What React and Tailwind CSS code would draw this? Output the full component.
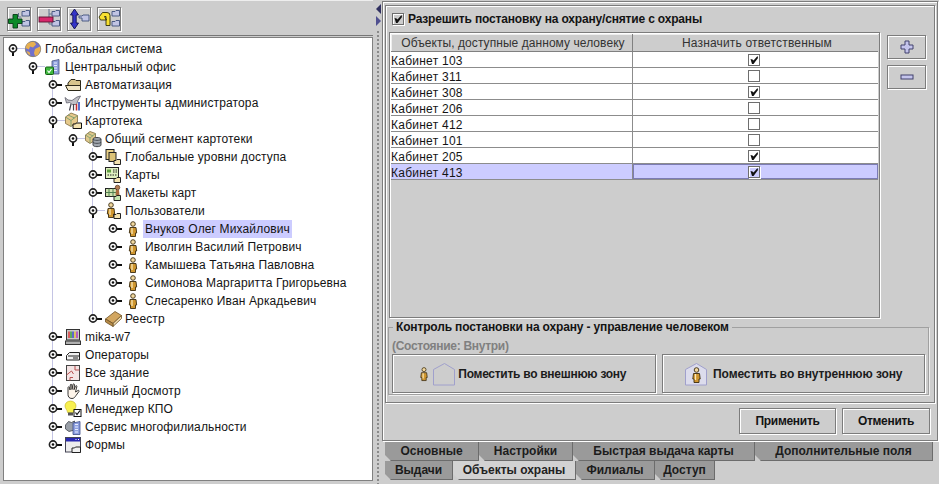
import React from "react";

const Handle = ({ open }) => (
  <svg width="18" height="18" viewBox="0 0 18 18" className="relative shrink-0 mr-0">
    {open ? (
      <>
        <path d="M10 8.500h8" stroke="#c4c4e4" />
        <path d="M6 11v5" stroke="#111" strokeWidth="2" />
      </>
    ) : (
      <path d="M10 9h5" stroke="#111" strokeWidth="2" />
    )}
    <circle cx="6" cy="8.500" r="3.600" fill="#fff" stroke="#222" strokeWidth="1.600" />
    <circle cx="6" cy="8.500" r="1.300" fill="#111" />
  </svg>
);

const Ico = ({ children, w = 16 }) => (
  <svg width={w} height="16" viewBox={`0 0 ${w} 16`} className="shrink-0 overflow-visible">
    {children}
  </svg>
);

const FolderMini = () => (
  <path d="M9 11.500h2l1-1h3.500v5H9z" fill="#f4e3b0" stroke="#222" />
);

const Person = () => (
  <g>
    <circle cx="8" cy="3" r="2.300" fill="#f2d9a0" stroke="#3c2c10" strokeWidth=".9" />
    <path d="M5 6.500h6l.7 5.500h-1.200v3.500h-5V12H4.300z" fill="#cf962f" stroke="#3c2c10" strokeWidth=".9" />
    <path d="M7 7v6" stroke="#fbe8b8" strokeWidth="1.300" />
  </g>
);

const icons = {
  globe: (
    <Ico>
      <circle cx="8" cy="8" r="7.700" fill="#7070cc" stroke="#77704e" strokeWidth=".7" />
      <path d="M2 3c3-2 6-2.500 8-1.500l1 2-3 3-3-1-1 3-3.500-1.500zM10 8l5-2.500.5 3.500-2.500 5-3 1-1-3zM1.500 10l3 1 1 3.500-2.500-1.500z" fill="#e8b050" />
    </Ico>
  ),
  office: (
    <Ico>
      <path d="M7 2l7-1.500V15H7z" fill="#8fa0dc" stroke="#44507c" strokeWidth=".8" />
      <path d="M9 4h3M9 6.500h3M9 9h3M9 11.500h3" stroke="#e6ecff" />
      <rect x=".5" y="8" width="8" height="7.500" rx="1" fill="#3fb83f" stroke="#146014" />
      <path d="M2.500 11.500l1.500 2 2.500-3.500" stroke="#fff" strokeWidth="1.200" fill="none" />
    </Ico>
  ),
  folder: (
    <Ico>
      <path d="M3 6l3-3.500h4l1 1h4.500V13H3z" fill="#d8c48c" stroke="#2c2818" />
      <path d="M.5 8.500h15V13.500H3z" fill="#f2e6c4" stroke="#2c2818" />
    </Ico>
  ),
  tools: (
    <Ico>
      <path d="M0 2.500l3 2.500 4 .5 5-3.500 3.500-1L13 5.500 11.500 9.500H7.500l-3-2-3 .5z" fill="#c0c0c6" stroke="#60606c" strokeWidth=".8" />
      <path d="M6 9l-1.500 6.500M8.500 9v6.500" stroke="#44444f" strokeWidth="1.200" />
      <path d="M11.500 9v6.500" stroke="#c83030" strokeWidth="1.600" />
      <path d="M14 7v8.500" stroke="#3050c0" strokeWidth="1.600" />
    </Ico>
  ),
  archive: (
    <Ico>
      <path d="M.5 4l5.500-4 6.500 2.500v6.500L6 13.500.5 10.500z" fill="#e6c98c" stroke="#7d6a3c" strokeWidth=".8" />
      <path d="M.5 4L6 7.500l6.500-5M6 7.500v6M3 2l6.500 3" stroke="#80a070" strokeWidth="1" fill="none" />
      <path d="M8 11h2.500l1-1h5v5.500H8z" fill="#f4e3b0" stroke="#111" />
    </Ico>
  ),
  segment: (
    <Ico>
      <path d="M.5 4L5 .5l5.500 2v6.500L5 12.500.5 9.500z" fill="#dfc88c" stroke="#7d6a3c" strokeWidth=".8" />
      <path d="M3 2.500l5 2.500M.5 4L5 7l5.500-4.500M5 7v5" stroke="#80a070" strokeWidth=".9" fill="none" />
      <path d="M8 8c0-2 8-2 8 0v6c0 2.200-8 2.200-8 0z" fill="#a0a6ae" stroke="#34383e" strokeWidth=".9" />
      <path d="M8 8c0 1.800 8 1.800 8 0M8 11c0 1.800 8 1.800 8 0" fill="none" stroke="#34383e" strokeWidth=".8" />
    </Ico>
  ),
  levels: (
    <Ico>
      <rect x="1" y=".5" width="8" height="10" fill="#e8d089" stroke="#222" />
      <rect x="4" y="3.500" width="7" height="9" fill="#dcc378" stroke="#222" />
      <FolderMini />
    </Ico>
  ),
  cards: (
    <Ico>
      <rect x=".5" y=".5" width="13" height="11" fill="#dff0c0" stroke="#222" />
      <rect x="2" y="2.500" width="4" height="3" fill="#60a040" />
      <path d="M8 3h4M8 5h4M2.500 8h9" stroke="#222" strokeDasharray="1.500 1" />
      <FolderMini />
    </Ico>
  ),
  layouts: (
    <Ico w={17}>
      <rect x=".5" y="3.500" width="11" height="8" fill="#cfe2b0" stroke="#222" />
      <path d="M4 3.500v8M8 3.500v8M.5 7.500h11" stroke="#508050" />
      <circle cx="12.500" cy="2.500" r="2.300" fill="#b07a50" stroke="#5c3a20" strokeWidth=".7" />
      <path d="M11 5h3l.5 5.500H10.500z" fill="#a86c40" />
      <path d="M9 11.500h2l1-1h3.500v5H9z" fill="#c4e6b0" stroke="#222" />
    </Ico>
  ),
  users: (
    <Ico>
      <g transform="translate(-2 -1)">
        <Person />
      </g>
      <FolderMini />
    </Ico>
  ),
  person: (
    <Ico>
      <Person />
    </Ico>
  ),
  book: (
    <Ico w={17}>
      <path d="M.5 8L10 .5l6.500 4L8 12.500z" fill="#d2a660" stroke="#6c5024" strokeWidth=".8" />
      <path d="M8 12.500L16.500 4.500v3L8 15.500z" fill="#f0dcb0" stroke="#6c5024" strokeWidth=".8" />
      <path d="M.5 8L8 12.500v3L.5 11z" fill="#b88c48" stroke="#6c5024" strokeWidth=".8" />
    </Ico>
  ),
  computer: (
    <Ico>
      <rect x="1.500" y=".5" width="13" height="10.500" fill="#c8c8c8" stroke="#333" />
      <path d="M4 2.500v6.500" stroke="#e03030" strokeWidth="1.400" />
      <path d="M6 2.500v6.500" stroke="#30a030" strokeWidth="1.400" />
      <path d="M8 2.500v6.500" stroke="#3040d0" strokeWidth="1.400" />
      <path d="M10 2.500v6.500" stroke="#e0c030" strokeWidth="1.400" />
      <path d="M12 2.500v6.500" stroke="#b030c0" strokeWidth="1.400" />
      <rect x=".5" y="12" width="15" height="3.500" fill="#b0b0b0" stroke="#333" />
    </Ico>
  ),
  operators: (
    <Ico>
      <path d="M1.500 8.500l3-3h10V13h-13z" fill="#f2f2f2" stroke="#222" />
      <path d="M3 9h11.500M8 11h5" stroke="#222" />
    </Ico>
  ),
  building: (
    <Ico>
      <rect x="1.500" y=".5" width="13" height="15" fill="#f4e4e4" stroke="#444" />
      <path d="M1.500 10l5-4 2 3M10 1v4h4.500M5 15.500v-3h3" fill="none" stroke="#b85050" />
    </Ico>
  ),
  hand: (
    <Ico>
      <path d="M3 7V4.500c0-1 1.500-1 1.500 0L5 7l.3-5c0-1 1.500-1 1.500 0L7 6.500 8 1.500c0-1 1.500-.8 1.500.2l-.5 5 1.500-3.500c.4-1 1.700-.5 1.300.5L10.500 9l2.500-1.500c1-.5 1.500.5.800 1.200L11 12.500c-1 1.500-2 3-4 3-3 0-4-2-4-4z" fill="#fdf4ea" stroke="#222" strokeWidth=".9" />
    </Ico>
  ),
  bulb: (
    <Ico w={16}>
      <path d="M5.500 0C2 0 0 2.500 0 5c0 2.500 2.500 4 2.500 6.500h6C8.500 9 11 7.500 11 5c0-2.500-2-5-5.500-5z" fill="#f8f050" stroke="#c0b020" strokeWidth=".6" />
      <rect x="3" y="11.500" width="5" height="3" fill="#555" />
      <rect x="9" y="8.500" width="7" height="7" fill="#fff" stroke="#111" />
      <path d="M10.500 11.500l1.500 2 3-4" fill="none" stroke="#111" strokeWidth="1.200" />
    </Ico>
  ),
  branches: (
    <Ico>
      <path d="M.5 6l3-3.500 3 1 3-1.500V11L4 12.500.5 10z" fill="#9aa0a8" stroke="#40444c" strokeWidth=".8" />
      <path d="M8 4l7-1.500V15.500H8z" fill="#8ea0e0" stroke="#3c4c88" strokeWidth=".8" />
      <path d="M10 5.500h3M10 8h3M10 10.500h3M10 13h3" stroke="#e8eeff" />
    </Ico>
  ),
  forms: (
    <Ico>
      <rect x=".5" y=".5" width="15" height="14.500" fill="#eeeeee" stroke="#445" />
      <rect x="1" y="1" width="14" height="3.500" fill="#2828b0" />
      <path d="M10.500 2.500h1M13 2.500h1" stroke="#fff" />
      <path d="M7 11h2.500l1-1h5v5.500H7z" fill="#f2f2f2" stroke="#222" />
    </Ico>
  ),
};

const tree = {
  label: "Глобальная система", icon: "globe", open: true, children: [
    {
      label: "Центральный офис", icon: "office", open: true, guide: true, children: [
        { label: "Автоматизация", icon: "folder" },
        { label: "Инструменты администратора", icon: "tools" },
        {
          label: "Картотека", icon: "archive", open: true, children: [
            {
              label: "Общий сегмент картотеки", icon: "segment", open: true, guide: true, children: [
                { label: "Глобальные уровни доступа", icon: "levels" },
                { label: "Карты", icon: "cards" },
                { label: "Макеты карт", icon: "layouts" },
                {
                  label: "Пользователи", icon: "users", open: true, children: [
                    { label: "Внуков Олег Михайлович", icon: "person", selected: true },
                    { label: "Иволгин Василий Петрович", icon: "person" },
                    { label: "Камышева Татьяна Павловна", icon: "person" },
                    { label: "Симонова Маргаритта Григорьевна", icon: "person" },
                    { label: "Слесаренко Иван Аркадьевич", icon: "person" },
                  ],
                },
                { label: "Реестр", icon: "book" },
              ],
            },
          ],
        },
        { label: "mika-w7", icon: "computer" },
        { label: "Операторы", icon: "operators" },
        { label: "Все здание", icon: "building" },
        { label: "Личный Досмотр", icon: "hand" },
        { label: "Менеджер КПО", icon: "bulb" },
        { label: "Сервис многофилиальности", icon: "branches" },
        { label: "Формы", icon: "forms" },
      ],
    },
  ],
};

const TreeNode = ({ node }) => (
  <div>
    <div className="flex h-[18px] items-center">
      <Handle open={node.open} />
      <span className="flex w-[18px] shrink-0 items-center">{icons[node.icon]}</span>
      <span className={`px-[2px] leading-[18px] tracking-[0.13px] whitespace-nowrap ${node.selected ? "bg-[#ccccff]" : ""}`}>
        {node.label}
      </span>
    </div>
    {node.children && (
      <div className="relative ml-[20px]">
        {node.guide && <div className="absolute left-[5px] top-0 bottom-[9px] w-px bg-[#c4c4e4]" />}
        {node.children.map((c) => (
          <TreeNode key={c.label} node={c} />
        ))}
      </div>
    )}
  </div>
);

const ToolFolders = () => (
  <path d="M14 3.500h3l1-1h3.500V8H14zM14 13.500h3l1-1h3.500V18H14z" fill="#c0c4e4" stroke="#40507c" strokeWidth=".9" />
);

const toolButtons = [
  <>
    <ToolFolders />
    <path d="M10.500 5v4h3" fill="none" stroke="#60708c" />
    <path d="M5 6.500h4.500V11H14v4.500H9.500V20H5v-4.500H.5V11H5z" fill="#0c8a28" stroke="#063a14" strokeWidth=".9" />
  </>,
  <>
    <ToolFolders />
    <path d="M11 1v5h3M11 6v10h3" fill="none" stroke="#60708c" />
    <rect x="1" y="9" width="14" height="5" fill="#d8286c" stroke="#5c1030" strokeWidth=".9" />
  </>,
  <>
    <path d="M11 8h3l1-1h6v6h-7v-3h-3z" fill="#c0c4e4" stroke="#40507c" strokeWidth=".9" />
    <path d="M6.500 1l4 6H8.200v8h2.300l-4 6-4-6h2.300V7H2.500z" fill="#3434c8" stroke="#101050" strokeWidth=".9" />
  </>,
  <>
    <ToolFolders />
    <path d="M11 5v13" stroke="#60708c" />
    <path d="M1 9l3.500-4.500H9a3 3 0 0 1 3 3v10H8V8.500H6.500L8.500 12H2.500z" fill="#f8e030" stroke="#30300c" strokeWidth=".9" />
  </>,
];

const raised = "border border-[#7c7c7c] shadow-[inset_1px_1px_0_#fff,1px_1px_0_#fff]";

const rows = [
  ["Кабинет 103", true],
  ["Кабинет 311", false],
  ["Кабинет 308", true],
  ["Кабинет 206", false],
  ["Кабинет 412", false],
  ["Кабинет 101", false],
  ["Кабинет 205", true],
  ["Кабинет 413", true],
];

const CheckBox = ({ on }) => (
  <span className="inline-flex h-[12px] w-[12px] shrink-0 items-center justify-center border border-[#6e6e6e] shadow-[inset_1px_1px_0_#fff,1px_1px_0_#fff]">
    {on && (
      <svg width="10" height="10" viewBox="0 0 10 10">
        <path d="M1.500 4L3.500 4.500 4.500 5.500 8.500 1 9 3 4.500 9 3 9z" fill="#111" />
      </svg>
    )}
  </span>
);

const BigBtn = ({ children }) => (
  <button className={`${raised} flex h-[39px] flex-1 items-center justify-center gap-[4px] font-bold text-[#1c1c1c]`}>
    {children}
  </button>
);

const HouseIcon = ({ person, className = "" }) => (
  <svg width="24" height="24" viewBox="0 0 24 24" className={`shrink-0 ${className}`}>
    <path d="M1.500 7.500L12.500 1.500l10 6v15.500h-21z" fill={person ? "#dcdcec" : "none"} stroke="#a0a0cc" />
    {person && (
      <g transform="translate(4.500 5)">
        <Person />
      </g>
    )}
  </svg>
);

const tabRows = [
  [
    ["Основные", "w-[94px]"],
    ["Настройки", "w-[94px]"],
    ["Быстрая выдача карты", "w-[182px]"],
    ["Дополнительные поля", "w-[178px]"],
  ],
  [
    ["Выдачи", "w-[68px]"],
    ["Объекты охраны", "w-[123px]", true],
    ["Филиалы", "w-[79px]"],
    ["Доступ", "w-[60px]"],
  ],
];

export default function App() {
  return (
    <div className="flex h-[484px] w-[939px] overflow-hidden bg-[#cdcdcd] text-[12px] text-[#141414] font-['Liberation_Sans',Arial,sans-serif]">
      {/* left side */}
      <div className="flex w-[373px] shrink-0 flex-col">
        <div className="flex h-[36px] shrink-0 items-center gap-[6px] border-t border-t-[#eee] border-b border-b-[#777] pl-[7px] pt-[1px]">
          {toolButtons.map((b, i) => (
            <button key={i} className={`${raised} flex h-[24px] w-[24px] items-center justify-center`}>
              <svg width="22" height="22" viewBox="0 0 22 22">{b}</svg>
            </button>
          ))}
        </div>
        <div className="mb-[3px] ml-[3px] mt-[1px] flex-1 border border-[#808080] bg-white pl-[3px] pt-[2px]">
          <TreeNode node={tree} />
        </div>
      </div>

      {/* splitter */}
      <div className="flex w-[9px] shrink-0 flex-col items-center pl-[1px] pt-[3px]">
        <svg width="7" height="24" viewBox="0 0 7 24" className="shrink-0">
          <path d="M6 1v10L1 6z" fill="#303060" />
          <path d="M1 13v10l5-5z" fill="#505090" />
        </svg>
        <div className="mt-[3px] h-full w-[4px] bg-[radial-gradient(#8a8a8a_1px,transparent_1px)] bg-[length:4px_4px]" />
      </div>

      {/* right side */}
      <div className="flex min-w-0 flex-1 flex-col pr-[1px] pt-[1px]">
        <div className={`${raised} h-[440px] shrink-0 px-[2px] pt-[3px]`}>
          <div className={`${raised} flex h-[398px] flex-col px-[2px]`}>
            <label className="flex h-[26px] shrink-0 items-center gap-[4px] pl-[4px] font-bold tracking-[-0.17px]">
              <CheckBox on />
              Разрешить постановку на охрану/снятие с охраны
            </label>
            <div className="ml-[1px] flex">
              <div className={`${raised} h-[286px] w-[491px] shrink-0 p-[1px]`}>
                <div className="flex h-[18px] border-b border-[#808080] text-[#333] shadow-[inset_1px_1px_0_#eee]">
                  <div className="flex w-[242px] items-center justify-center border-r border-[#808080] pl-[3px] tracking-[0.06px]">Объекты, доступные данному человеку</div>
                  <div className="flex flex-1 items-center justify-center pl-[3px] tracking-[0.17px]">Назначить ответственным</div>
                </div>
                {rows.map(([name, on], i) => {
                  const sel = i === rows.length - 1;
                  return (
                    <div key={name} className={`flex h-[16px] border-b border-[#8c8c8c] ${sel ? "bg-[#ccccff]" : "bg-white"}`}>
                      <div className="w-[242px] border-r border-[#8c8c8c] leading-[19px] tracking-[0.25px]">{name}</div>
                      <div className={`flex flex-1 items-center justify-center pr-[3px] ${sel ? "border border-[#7c7cb4]" : ""}`}>
                        <CheckBox on={on} />
                      </div>
                    </div>
                  );
                })}
              </div>
              <div className="ml-[7px] flex flex-col gap-[6px] pt-[3px]">
                <button className={`${raised} flex h-[24px] w-[39px] items-center justify-center`}>
                  <svg width="14" height="14" viewBox="0 0 14 14">
                    <path d="M5 1h4v4h4v4H9v4H5V9H1V5h4z" fill="#c4c4ec" stroke="#40406c" />
                  </svg>
                </button>
                <button className={`${raised} flex h-[24px] w-[39px] items-center justify-center`}>
                  <svg width="14" height="6" viewBox="0 0 14 6">
                    <rect x="1" y="1" width="12" height="4" fill="#c4c4ec" stroke="#40406c" />
                  </svg>
                </button>
              </div>
            </div>
            <fieldset className="mt-[2px] h-[75px] w-[541px] border border-[#a0a0a0] px-[3px] shadow-[1px_1px_0_#eee]">
              <legend className="ml-[1px] px-[3px] leading-[14px] font-bold tracking-[-0.15px]">Контроль постановки на охрану - управление человеком</legend>
              <div className="h-[20px] pt-[4px] leading-[17px] font-bold tracking-[-0.3px] text-[#808080]">(Состояние: Внутри)</div>
              <div className="flex gap-[6px]">
                <BigBtn>
                  <svg width="14" height="16" viewBox="0 0 16 16"><Person /></svg>
                  <HouseIcon className="-ml-[3px]" />
                  <span className="-ml-[2px] mr-[4px] tracking-[-0.28px]">Поместить во внешнюю зону</span>
                </BigBtn>
                <BigBtn>
                  <HouseIcon person />
                  <span className="ml-[1px] tracking-[-0.1px]">Поместить во внутреннюю зону</span>
                </BigBtn>
              </div>
            </fieldset>
          </div>

          <div className="mt-[5px] flex justify-end gap-[6px] pr-[5px] font-bold tracking-[-0.3px]">
            <button className={`${raised} h-[26px] w-[97px]`}>Применить</button>
            <button className={`${raised} h-[26px] w-[88px]`}>Отменить</button>
          </div>
        </div>

        <div className="pl-[3px] pt-[1px]">
          {tabRows.map((row, i) => (
            <div key={i} className="flex h-[19px]">
              {row.map(([label, w, active]) => (
                <div
                  key={label}
                  className={`${w} flex h-[19px] items-center justify-center border-r border-b border-[#6c6c6c] font-bold [clip-path:polygon(0_0,100%_0,100%_100%,6px_100%,0_calc(100%-6px))] ${active ? "bg-[#d2d2d2] text-[#222]" : "bg-[#9a9a9a] text-[#1c1c1c]"}`}
                >
                  {label}
                </div>
              ))}
            </div>
          ))}
        </div>
      </div>
    </div>
  );
}
